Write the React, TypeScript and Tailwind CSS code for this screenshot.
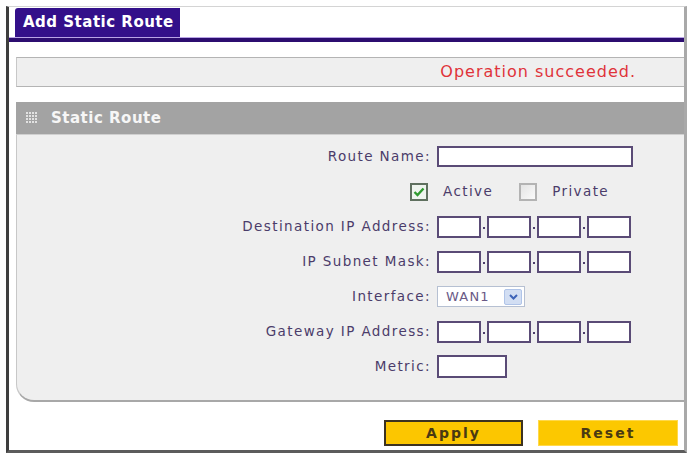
import React from "react";

const lbl = "text-[13.5px] tracking-[1.4px] text-[#4b3c6a] whitespace-nowrap";

function IpBoxes() {
  return (
    <div className="flex items-center">
      {[0, 1, 2, 3].map((i) => (
        <React.Fragment key={i}>
          {i > 0 && (
            <div className="w-[6px] h-[22px] flex items-center justify-center">
              <div className="w-[2px] h-[2px] bg-[#4b3c6a] mt-[3px]" />
            </div>
          )}
          <div className="w-[44px] h-[22px] bg-white border-2 border-[#5a4b76]" />
        </React.Fragment>
      ))}
    </div>
  );
}

function Row({ label, children }: { label: string; children: React.ReactNode }) {
  return (
    <div className="flex h-[35px] items-center">
      <div className={`w-[414px] text-right ${lbl}`}>{label}</div>
      <div className="ml-[6px]">{children}</div>
    </div>
  );
}

export default function App() {
  return (
    <div className="w-[690px] h-[454px] bg-white overflow-hidden font-['DejaVu_Sans',sans-serif]">
      <div className="ml-[6px] mt-[6px] w-[681px] h-[447px] border-l-[3px] border-l-[#3e3e3e] border-t border-t-[#d4d4d4] border-r-[3px] border-r-[#a9a9a9] border-b-[3px] border-b-[#5c5c5c] flex flex-col">
        {/* Tab */}
        <div className="pl-[6px] pt-[1px]">
          <div className="w-[165px] h-[29px] bg-[#33108a] rounded-tl-[3px] flex items-center pl-[8px] text-white font-bold text-[15px] tracking-[0.5px]">
            Add Static Route
          </div>
        </div>
        <div className="h-[5px] bg-[#2c0d70] border-t border-t-[#b9a4e6]" />

        <div className="pl-[7px] flex flex-col">
          {/* Message bar */}
          <div className="mt-[15px] h-[30px] bg-[#efefef] border-y border-[#b4b4b4] border-l border-l-[#c8c8c8] flex items-center justify-end pr-[48px]">
            <span className="text-[16px] tracking-[1px] text-[#e0333a]">Operation succeeded.</span>
          </div>

          {/* Section header */}
          <div className="mt-[15px] h-[33px] bg-[#a3a3a3] flex items-center pl-[10px] border-b border-b-[#d0d0d0]">
            <svg width="12" height="12" viewBox="0 0 12 12" className="mr-[13px]">
              {[0, 1, 2, 3].map((r) =>
                [0, 1, 2, 3].map((c) => (
                  <rect key={`${r}-${c}`} x={c * 3} y={r * 3} width="2" height="2" fill="#e2e2e2" />
                ))
              )}
            </svg>
            <span className="text-[15px] tracking-[0.5px] font-bold text-[#f6f6f6]">Static Route</span>
          </div>

          {/* Body */}
          <div className="h-[267px] bg-[#efefef] border-l border-l-[#c8c8c8] border-b-2 border-b-[#a8a8a8] rounded-bl-[18px] pt-[4px] flex flex-col">
            <Row label="Route Name:">
              <div className="w-[196px] h-[21px] bg-white border-2 border-[#5a4b76]" />
            </Row>
            <div className="flex h-[35px] items-center pl-[393px]">
              <div className="w-[18px] h-[18px] border-2 border-[#5f705f] bg-[#eef4ee] flex items-center justify-center">
                <svg width="12" height="10" viewBox="0 0 12 10">
                  <path d="M1.5 5 L4.5 8 L10.5 1.5" stroke="#2f9a2f" strokeWidth="2.4" fill="none" />
                </svg>
              </div>
              <span className={`ml-[15px] ${lbl}`}>Active</span>
              <div className="ml-[26px] w-[18px] h-[18px] border-2 border-[#b3b3b3] bg-gradient-to-br from-[#e4e4e4] to-[#fafafa]" />
              <span className={`ml-[15px] ${lbl}`}>Private</span>
            </div>
            <Row label="Destination IP Address:">
              <IpBoxes />
            </Row>
            <Row label="IP Subnet Mask:">
              <IpBoxes />
            </Row>
            <Row label="Interface:">
              <div className="w-[88px] h-[21px] bg-white border border-[#b6c0d2] flex items-center justify-between pl-[8px] pr-[2px]">
                <span className="text-[13px] tracking-[1.2px] text-[#6a5a86]">WAN1</span>
                <div className="w-[18px] h-[16px] bg-[#d2def3] border border-[#b0c4e8] rounded-[2px] flex items-center justify-center">
                  <svg width="9" height="6" viewBox="0 0 9 6">
                    <path d="M1 1 L4.5 4.5 L8 1" stroke="#3d63b8" strokeWidth="2" fill="none" />
                  </svg>
                </div>
              </div>
            </Row>
            <Row label="Gateway IP Address:">
              <IpBoxes />
            </Row>
            <Row label="Metric:">
              <div className="w-[70px] h-[23px] bg-white border-2 border-[#5a4b76]" />
            </Row>
          </div>

          {/* Buttons */}
          <div className="mt-[18px] flex justify-end pr-[6px] gap-[15px]">
            <button className="w-[139px] h-[26px] bg-[#fcc600] border-2 border-[#3c3220] text-[14px] font-bold tracking-[2px] text-[#4a3a12]">
              Apply
            </button>
            <button className="w-[140px] h-[26px] bg-[#fcc800] border border-[#ffd94a] text-[14px] font-bold tracking-[2px] text-[#4a3a12]">
              Reset
            </button>
          </div>
        </div>
      </div>
    </div>
  );
}
